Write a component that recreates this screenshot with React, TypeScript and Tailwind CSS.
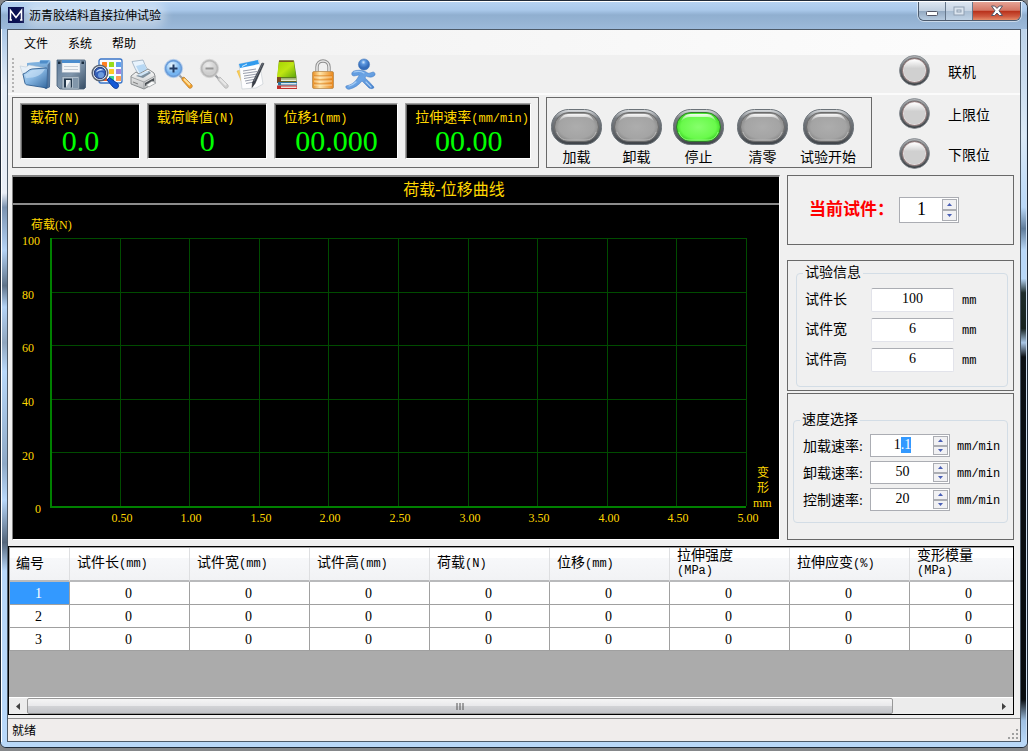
import { useEffect, useRef } from "react";

const MENU = ["文件", "系统", "帮助"];

const READOUTS = [
  { label: "载荷", unit: "(N)", value: "0.0", width: "w-[120px]" },
  { label: "载荷峰值", unit: "(N)", value: "0", width: "w-[120px]" },
  { label: "位移", unit: "1(mm)", value: "00.000", width: "w-[125px]" },
  { label: "拉伸速率", unit: "(mm/min)", value: "00.00", width: "w-[126px]" },
];

const ACTIONS = [
  { label: "加载", on: false },
  { label: "卸载", on: false },
  { label: "停止", on: true },
  { label: "清零", on: false },
  { label: "试验开始", on: false },
];

const COLUMNS = [
  { name: "试件长", unit: "(mm)" },
  { name: "试件宽", unit: "(mm)" },
  { name: "试件高", unit: "(mm)" },
  { name: "荷载", unit: "(N)" },
  { name: "位移", unit: "(mm)" },
  { name: "拉伸强度", unit: "(MPa)", wrap: true },
  { name: "拉伸应变", unit: "(%)" },
  { name: "变形模量", unit: "(MPa)", wrap: true },
];

const TOOLS = [
  { label: "打开", icon: <OpenIcon /> },
  { label: "保存", icon: <SaveIcon /> },
  { label: "预览", icon: <PreviewIcon /> },
  { label: "打印", icon: <PrintIcon /> },
  { label: "放大", icon: <ZoomIcon zoomIn /> },
  { label: "缩小", icon: <ZoomIcon /> },
  { label: "记录", icon: <NotesIcon /> },
  { label: "数据", icon: <BooksIcon /> },
  { label: "锁定", icon: <LockIcon /> },
  { label: "运行", icon: <RunnerIcon /> },
];

export default function App() {
  return (
    <div className="min-h-screen bg-[#85878a] pb-[3px] font-['Liberation_Serif','Noto_Sans_CJK_SC',serif] text-sm text-black">
      <div className="flex min-h-[calc(100vh-3px)] flex-col overflow-hidden rounded-t-lg rounded-b-md border border-[#1f2a38] bg-[#b9d7f7]">
        <TitleBar />
        <div className="grid flex-1 grid-cols-[6px_1fr_6px]">
          <div className="border-l border-white bg-[linear-gradient(to_bottom,#a9c6e6_0%,#e4edf7_8%,#e9eef6_23%,#7b93b0_25%,#b4d3f5_31%,#5f7389_36%,#b4d3f5_39%,#90a6be_44%,#b8d8fa_48%,#8ea9c6_61%,#b8d8fa_66%,#53657a_72%,#b8d8fa_76%,#b8d8fa_100%)]" />
          <main className="flex min-w-0 flex-col border border-[#4d5a68] bg-[#f0f0f0]">
            <MenuBar />
            <Toolbar />
            <TopPanels />
            <div className="mt-[6px] flex gap-[7px] pr-[6px] pl-1">
              <Plot />
              <SidePanels />
            </div>
            <ResultTable />
            <footer className="mt-[3px] flex items-end justify-between border-t border-[#8c8c8c] bg-[#f0edec] pl-1 font-['Noto_Sans_CJK_SC',sans-serif] text-xs leading-[22px]">
              <span>就绪</span>
              <svg className="mr-px mb-px size-3" viewBox="0 0 12 12" fill="#a0a0a0">
                <path d="M9 1h2v2H9zM5 5h2v2H5zM9 5h2v2H9zM1 9h2v2H1zM5 9h2v2H5zM9 9h2v2H9z" />
              </svg>
            </footer>
          </main>
          <div className="border-r border-[#cfe0f2] bg-[linear-gradient(to_bottom,#bdd3ea_0%,#dbe9f6_15%,#b9d8f8_25%,#5f7b99_28%,#b9d8f8_31%,#b9d8f8_35%,#1d2c2c_37%,#15211f_42%,#a9c6e6_44%,#0b1015_46%,#070b0f_94%,#9fc0e2_97%,#b9d8f8_100%)]" />
        </div>
        <div className="h-[5px] bg-[#b9d8f8]" />
      </div>
    </div>
  );
}

function TitleBar() {
  return (
    <header className="flex h-7 items-start justify-between border-t border-white bg-[linear-gradient(to_bottom,#b5d2f1_0%,#a9c8ea_30%,#90afd0_48%,#96b4d4_75%,#9cbadb_100%)] pr-[6px] pl-[7px]">
      <div className="flex items-center gap-[5px] pt-[5px]">
        <svg className="size-4" viewBox="0 0 16 16">
          <rect width="16" height="16" fill="#0a1152" />
          <path d="M2.500 13V3.500L8 10.500l5.500-7V13M1.500 13h2.500M12 13h2.500" fill="none" stroke="#fff" strokeWidth="1.500" />
        </svg>
        <h1 className="rounded-full bg-white/35 font-['Noto_Sans_CJK_SC',sans-serif] text-xs leading-4 shadow-[0_0_8px_5px_rgba(255,255,255,0.35)]">
          沥青胶结料直接拉伸试验
        </h1>
      </div>
      <div className="flex h-[19px] overflow-hidden rounded-b-md border border-t-0 border-[#4c5b6e] shadow-[0_0_0_1px_rgba(255,255,255,0.5)]">
        <button aria-label="最小化" className="flex w-[27px] items-center justify-center border-r border-[#66778b] bg-[linear-gradient(to_bottom,#dce6f1_0%,#c0cfdf_48%,#93a9c1_52%,#b7cbe0_100%)]">
          <svg className="mt-1" width="14" height="8" viewBox="0 0 14 8">
            <rect x="1.500" y="2.500" width="11" height="4" rx="1" fill="#fff" stroke="#535666" />
          </svg>
        </button>
        <button aria-label="最大化" className="flex w-[27px] items-center justify-center border-r border-[#66778b] bg-[linear-gradient(to_bottom,#dce6f1_0%,#c8d5e4_48%,#a9bdd2_52%,#c0d2e5_100%)]">
          <svg width="13" height="10" viewBox="0 0 13 10">
            <rect x="1" y="1" width="10" height="8" fill="#dbe4ee" stroke="#8f9fb2" />
            <rect x="4" y="4" width="4" height="2" fill="none" stroke="#8f9fb2" />
          </svg>
        </button>
        <button aria-label="关闭" className="flex w-[47px] items-center justify-center bg-[linear-gradient(to_bottom,#e5a395_0%,#d47765_46%,#b9321c_52%,#cf5a40_80%,#e58d6a_100%)]">
          <svg width="14" height="12" viewBox="0 0 14 12">
            <path d="M1.500 1h3.200L7 3.400 9.300 1h3.200L9 5.800l3.500 4.700H9.300L7 8l-2.300 2.500H1.500L5 5.800z" fill="#fff" stroke="#525565" />
          </svg>
        </button>
      </div>
    </header>
  );
}

function MenuBar() {
  return (
    <nav className="flex h-[25px] items-center gap-5 bg-gradient-to-r from-[#f0f0f0] to-[#fdfdfd] pl-4 font-['Noto_Sans_CJK_SC',sans-serif] text-xs">
      {MENU.map((item) => (
        <button key={item}>{item}</button>
      ))}
    </nav>
  );
}

function Toolbar() {
  return (
    <div className="flex h-10 items-start justify-between border-b-2 border-[#fbfbfb]">
      <div className="flex pt-[3px] pl-1">
        <svg className="h-[34px] w-[5px]" viewBox="0 0 5 34" fill="#b4b4b4">
          {[1, 5, 9, 13, 17, 21, 25, 29, 33].map((y) => (
            <rect key={y} y={y - 1} width="2" height="2" />
          ))}
        </svg>
        {TOOLS.map((tool) => (
          <button key={tool.label} aria-label={tool.label} className="flex w-9 justify-center">
            {tool.icon}
          </button>
        ))}
      </div>
      <Lamp label="联机" />
    </div>
  );
}

function Lamp({ label }: { label: string }) {
  return (
    <div className="flex w-[121px] shrink-0 items-center gap-[18px]">
      <svg className="size-[31px]" viewBox="0 0 31 31">
        <defs>
          <linearGradient id="lampRim" x1="0" y1="0" x2="0" y2="1">
            <stop offset="0" stopColor="#b4b6b8" />
            <stop offset="0.5" stopColor="#62666a" />
            <stop offset="1" stopColor="#3c4044" />
          </linearGradient>
          <linearGradient id="lampShine" x1="0" y1="0" x2="0" y2="1">
            <stop offset="0" stopColor="#fff" />
            <stop offset="0.4" stopColor="#d0d0d0" />
          </linearGradient>
        </defs>
        <circle cx="15.500" cy="15.500" r="15" fill="url(#lampRim)" stroke="#80878d" strokeWidth="0.800" />
        <circle cx="15.500" cy="15.500" r="13" fill="#6f7073" />
        <circle cx="15.500" cy="15.500" r="12" fill="#e9e4e4" stroke="#7b5b5b" strokeWidth="0.700" />
        <circle cx="15.500" cy="15.500" r="10.800" fill="url(#lampShine)" />
      </svg>
      <span className="pt-[5px] leading-4">{label}</span>
    </div>
  );
}

function TopPanels() {
  return (
    <div className="flex justify-between pt-[2px] pl-1">
      <div className="flex gap-[7px]">
        <section className="flex h-[71px] w-[527px] gap-[7px] border border-[#696969] px-[7px] pt-[5px]">
          {READOUTS.map((item) => (
            <div
              key={item.label}
              className={`${item.width} h-[56px] border border-t-[#a0a0a0] border-r-white border-b-white border-l-[#a0a0a0]`}
            >
              <div className="h-full border-t border-l border-[#696969] bg-black pt-[5px]">
                <div className="pl-2 leading-4 whitespace-nowrap text-[#ffd700]">
                  {item.label}
                  <Unit>{item.unit}</Unit>
                </div>
                <div className="text-center text-[30px] leading-[28px] text-[#00ff00]">{item.value}</div>
              </div>
            </div>
          ))}
        </section>
        <section className="grid h-[71px] w-[326px] grid-cols-[59px_61px_63px_65px_66px] border border-[#696969] pt-[11px]">
          {ACTIONS.map((action) => (
            <button key={action.label} className="flex flex-col items-center gap-[5px]">
              <Pill on={action.on} />
              <span className="leading-4 whitespace-nowrap">{action.label}</span>
            </button>
          ))}
        </section>
      </div>
      <div className="flex flex-col gap-[9px] pt-px">
        <Lamp label="上限位" />
        <Lamp label="下限位" />
      </div>
    </div>
  );
}

function Pill({ on }: { on: boolean }) {
  return (
    <svg className="h-9 w-[51px] shrink-0" viewBox="0 0 51 36">
      <defs>
        <linearGradient id="pillRim" x1="0" y1="0" x2="0" y2="1">
          <stop offset="0" stopColor="#dfe2e5" />
          <stop offset="0.25" stopColor="#787c81" />
          <stop offset="0.75" stopColor="#5a5e63" />
          <stop offset="1" stopColor="#3d4146" />
        </linearGradient>
        <linearGradient id="pillShine" x1="0" y1="0" x2="0" y2="1">
          <stop offset="0" stopColor="#fff" stopOpacity="0.950" />
          <stop offset="1" stopColor="#fff" stopOpacity="0" />
        </linearGradient>
        <radialGradient id="pillOff">
          <stop offset="0" stopColor="#adadad" />
          <stop offset="0.8" stopColor="#a4a4a4" />
          <stop offset="1" stopColor="#8f8f8f" />
        </radialGradient>
        <radialGradient id="pillOn">
          <stop offset="0" stopColor="#86ff6c" />
          <stop offset="0.8" stopColor="#69fa4b" />
          <stop offset="1" stopColor="#45dd2c" />
        </radialGradient>
      </defs>
      <rect x="0.500" y="0.500" width="50" height="35" rx="17" fill="url(#pillRim)" stroke="#6b7278" />
      <rect x="3.500" y="3.500" width="44" height="29" rx="14.500" fill={on ? "url(#pillOn)" : "url(#pillOff)"} stroke={on ? "#2f7d2a" : "#6c6c6c"} />
      <path d="M8 13c1-5 5-8 9-8h17c4 0 8 3 9 8-3-4-6-5-9-5H17c-3 0-6 1-9 5z" fill="url(#pillShine)" />
      <path d="M6 23c2 6 6 8 11 8h17c5 0 9-2 11-8" fill="none" stroke={on ? "#a7ff94" : "#c4c4c4"} strokeOpacity="0.700" />
    </svg>
  );
}

function Unit({ children }: { children: React.ReactNode }) {
  return <span className="font-['Liberation_Mono',monospace] text-xs">{children}</span>;
}

function Plot() {
  const xs = [1, 2, 3, 4, 5, 6, 7, 8, 9, 10];
  const ys = [0, 1, 2, 3, 4];
  return (
    <section className="flex min-w-0 flex-1 flex-col border border-t-2 border-t-[#808080] border-r-white border-b-white border-l-[#808080] bg-black">
      <h2 className="border-b-2 border-[#8c8c8c] pl-[116px] text-center text-base leading-[26px] text-[#ffd700]">
        荷载-位移曲线
      </h2>
      <svg className="w-full" viewBox="0 0 766 334" fontSize="12" fill="#ffd700">
        <g stroke="#004b00" shapeRendering="crispEdges">
          {xs.map((i) => {
            const x = Math.round(37 + i * 69.6) + 0.5;
            return <line key={i} x1={x} x2={x} y1="33" y2="301" />;
          })}
          {ys.map((i) => {
            const y = Math.round(33 + i * 53.6) + 0.5;
            return <line key={i} x1="37" x2="733" y1={y} y2={y} />;
          })}
        </g>
        <path d="M38 33V302H733" fill="none" stroke="#008000" strokeWidth="2" shapeRendering="crispEdges" />
        <text x="18" y="24">荷载(N)</text>
        {["100", "80", "60", "40", "20"].map((label, i) => (
          <text key={label} x="9" y={Math.round(40 + i * 53.7)}>{label}</text>
        ))}
        <text x="22" y="308">0</text>
        {xs.map((i) => (
          <text key={i} x={Math.round(39 + i * 69.6)} y="317" textAnchor="middle">
            {(i * 0.5).toFixed(2)}
          </text>
        ))}
        <text x="744" y="272">变</text>
        <text x="744" y="287">形</text>
        <text x="740" y="302">mm</text>
      </svg>
    </section>
  );
}

function SidePanels() {
  return (
    <aside className="flex w-[227px] shrink-0 flex-col">
      <section className="flex h-[70px] items-center gap-[5px] border border-[#696969] pl-[21px]">
        <label htmlFor="specimen" className="text-[17px] font-bold text-[#ff0000]">
          当前试件：
        </label>
        <Spinner id="specimen" value="1" large />
      </section>

      <section className="mt-[15px] border border-[#696969] px-[5px] pt-1 pb-[3px] pl-2">
        <fieldset className="h-[122px] rounded border border-[#d3dde6] shadow-none">
          <legend className="ml-[6px] px-[2px] leading-4">试验信息</legend>
          <div className="flex flex-col gap-[6px] pt-[7px] pl-2">
            <SizeRow id="length" label="试件长" value="100" />
            <SizeRow id="width" label="试件宽" value="6" />
            <SizeRow id="height" label="试件高" value="6" />
          </div>
        </fieldset>
      </section>

      <section className="mt-[2px] flex-1 border border-[#696969] px-[5px] pt-[18px]">
        <fieldset className="h-[111px] rounded border border-[#d3dde6]">
          <legend className="ml-[6px] px-[2px] leading-4">速度选择</legend>
          <div className="flex flex-col gap-1 pt-[6px] pl-[9px]">
            <SpeedRow id="load-rate" label="加载速率" value="1.1" selectFrom={1} />
            <SpeedRow id="unload-rate" label="卸载速率" value="50" />
            <SpeedRow id="control-rate" label="控制速率" value="20" />
          </div>
        </fieldset>
      </section>
    </aside>
  );
}

function SizeRow({ id, label, value }: { id: string; label: string; value: string }) {
  return (
    <div className="flex items-center">
      <label htmlFor={id} className="w-[66px] leading-4">{label}</label>
      <input
        id={id}
        defaultValue={value}
        className="h-6 w-[83px] rounded-xs border border-[#e2e3ea] border-t-[#abadb3] bg-white pb-[2px] text-center"
      />
      <span className="pl-2 leading-4"><Unit>mm</Unit></span>
    </div>
  );
}

function SpeedRow({ id, label, value, selectFrom }: { id: string; label: string; value: string; selectFrom?: number }) {
  return (
    <div className="flex items-center">
      <label htmlFor={id} className="w-[67px] pt-[2px] leading-4">{label}:</label>
      <Spinner id={id} value={value} selectFrom={selectFrom} />
      <span className="pt-[2px] pl-[7px] leading-4"><Unit>mm/min</Unit></span>
    </div>
  );
}

function Spinner({ id, value, large, selectFrom }: { id: string; value: string; large?: boolean; selectFrom?: number }) {
  const ref = useRef<HTMLInputElement>(null);

  useEffect(() => {
    if (selectFrom === undefined || !ref.current) return;
    ref.current.focus();
    ref.current.setSelectionRange(selectFrom, value.length);
  }, [selectFrom, value]);

  return (
    <div className={`flex border border-[#abadb3] bg-white p-px ${large ? "h-[26px] w-[60px]" : "h-[23px] w-20"}`}>
      <input
        ref={ref}
        id={id}
        defaultValue={value}
        className={`min-w-0 flex-1 pb-[2px] text-center outline-none selection:bg-[#3399ff] selection:text-white ${large ? "text-lg leading-5" : "text-sm leading-4"}`}
      />
      <div className="flex w-[15px] flex-col justify-between">
        <button aria-label="增加" tabIndex={-1} className="flex flex-1 items-center justify-center border border-[#abadb3] bg-[#f1f1f3]">
          <svg width="5" height="3" viewBox="0 0 5 3"><path d="M2.500 0L5 3H0z" fill="#4a5fb5" /></svg>
        </button>
        <button aria-label="减少" tabIndex={-1} className="flex flex-1 items-center justify-center border border-[#abadb3] bg-[#f1f1f3]">
          <svg width="5" height="3" viewBox="0 0 5 3"><path d="M0 0h5L2.500 3z" fill="#4a5fb5" /></svg>
        </button>
      </div>
    </div>
  );
}

function ResultTable() {
  return (
    <section className="mt-[6px] mr-[6px] flex min-w-0 flex-1 flex-col border border-black bg-[#ababab]">
      <div className="overflow-hidden border-t border-l border-[#a0a0a0]">
        <table className="w-[1020px] min-w-full table-fixed border-separate border-spacing-0">
          <thead>
            <tr className="h-[34px] bg-[linear-gradient(to_bottom,#fff_0%,#fff_28%,#f7f8fa_30%,#f1f2f4_100%)] text-left">
              <th className="w-[60px] border-r border-b-2 border-r-[#dedfe1] border-b-[#b9babc] pl-[6px] font-normal">编号</th>
              {COLUMNS.map((col) => (
                <th key={col.name} className="w-[120px] border-r border-b-2 border-r-[#dedfe1] border-b-[#b9babc] pl-[7px] leading-[14px] font-normal whitespace-nowrap">
                  {col.name}
                  {col.wrap && <br />}
                  <Unit>{col.unit}</Unit>
                </th>
              ))}
            </tr>
          </thead>
          <tbody>
            {[1, 2, 3].map((row) => (
              <tr key={row} className="h-[23px] bg-white text-center leading-4">
                <td className={`border-r border-b border-[#a0a0a0] pt-px pr-[2px] ${row === 1 ? "bg-[#3399ff] text-white" : ""}`}>{row}</td>
                {COLUMNS.map((col) => (
                  <td key={col.name} className="border-r border-b border-[#a0a0a0] pt-px pr-[2px]">0</td>
                ))}
              </tr>
            ))}
          </tbody>
        </table>
      </div>
      <div className="mt-auto flex h-[17px] border-t border-white bg-[#ececec]">
        <button aria-label="向左" className="flex w-[18px] items-center justify-center">
          <svg width="4" height="7" viewBox="0 0 4 7"><path d="M4 0v7L0 3.500z" fill="#404040" /></svg>
        </button>
        <div className="flex flex-1">
          <div className="flex w-[89.500%] items-center justify-center rounded-xs border border-[#979797] bg-[linear-gradient(to_bottom,#f5f5f5_0%,#e9e9eb_48%,#d2d3d6_52%,#c2c4c8_100%)]">
            <svg width="8" height="7" viewBox="0 0 8 7"><path d="M1 0v7M4 0v7M7 0v7" stroke="#555" /></svg>
          </div>
        </div>
        <button aria-label="向右" className="flex w-[18px] items-center justify-center">
          <svg width="4" height="7" viewBox="0 0 4 7"><path d="M0 0v7l4-3.500z" fill="#404040" /></svg>
        </button>
      </div>
    </section>
  );
}

/* TOOLBAR ICONS */
function OpenIcon() {
  return (
    <svg className="size-8" viewBox="0 0 32 32">
      <defs>
        <linearGradient id="folder" x1="0" y1="0" x2="1" y2="1">
          <stop offset="0" stopColor="#c4e1f7" />
          <stop offset="0.450" stopColor="#86b6e2" />
          <stop offset="1" stopColor="#34689f" />
        </linearGradient>
        <linearGradient id="folderBack" x1="0" y1="0" x2="0" y2="1">
          <stop offset="0" stopColor="#8fc0ea" />
          <stop offset="1" stopColor="#2f5686" />
        </linearGradient>
      </defs>
      <path d="M8 5l12-1 2-2h8c1 0 1.500.5 1.500 2L31 29l-4 2L8 20z" fill="url(#folderBack)" />
      <path d="M9 5l18-1v3L9 8z" fill="#7fb1de" />
      <path d="M21 2.500h9l-2 3h-7z" fill="#4f8dc9" />
      <path d="M1 8l6 1 3-2 16 3 1 13-20 3z" fill="#e6eff7" stroke="#b4c4d3" strokeWidth="0.500" />
      <path d="M4 16c4-1 6-5 9-5l14-1c1 0 1.500 1 1.500 2L28 30 9 27c-2 0-3-1-3.300-3z" fill="url(#folder)" stroke="#2f5d90" strokeWidth="0.900" />
      <path d="M6 16.500c4-1 5-4 8-4.500l12-1c-3 6-9 9-19 9z" fill="#d3e8f9" opacity="0.550" />
      <path d="M28.500 7l2.500-3-.5 25-2 1z" fill="#54779f" />
    </svg>
  );
}

function SaveIcon() {
  return (
    <svg className="size-8" viewBox="0 0 32 32">
      <defs>
        <linearGradient id="disk" x1="0" y1="0" x2="1" y2="1">
          <stop offset="0" stopColor="#5f7c9b" />
          <stop offset="0.500" stopColor="#8096ac" />
          <stop offset="1" stopColor="#354b62" />
        </linearGradient>
      </defs>
      <path d="M2 2h27c1 0 1.500.5 1.500 1.500v26L29 31H5l-3-3z" fill="url(#disk)" stroke="#435a73" strokeWidth="0.800" />
      <path d="M7 2h18v12.500H7z" fill="#f3f5f7" stroke="#9dabba" strokeWidth="0.500" />
      <path d="M7 2h18v3H7z" fill="#4c8dce" />
      <path d="M9 8.500h14M9 11.500h14" stroke="#c6cdd5" />
      <path d="M3 3.500h2.500V6H3zM26.500 3.500H29V6h-2.500z" fill="#1a2c3f" />
      <path d="M7 18.500h17V31H7z" fill="#aebdca" stroke="#6d8195" strokeWidth="0.700" />
      <path d="M9 20.500h8v9H9z" fill="#24384c" />
      <path d="M11 22h4.500v7.500H11z" fill="#eef2f5" />
      <path d="M11 29.500l4.500-7.500v7.500z" fill="#aab8c5" />
      <path d="M18 20h5v10h-5z" fill="#8196aa" />
    </svg>
  );
}

function PreviewIcon() {
  const tiles = ["#ff8020", "#98dc1d", "#5fa0ef", "#ffc21a", "#ffc926", "#a182db", "#f0622d", "#3ed789", "#ff9e52"];
  return (
    <svg className="size-8" viewBox="0 0 32 32">
      <rect x="8" y="1" width="23" height="24" rx="2" fill="#f8fbff" stroke="#3974c7" strokeWidth="1.300" />
      {tiles.map((color, i) => (
        <rect key={color} x={11 + (i % 3) * 7} y={4 + Math.floor(i / 3) * 7} width="5" height="5" rx="0.500" fill={color} />
      ))}
      <path d="M16 22l2.500-2.500 8.500 6.500c1.500 1.500 0 5-2.500 4.500l-2-1z" fill="#1659d5" stroke="#0c3b9b" />
      <circle cx="9" cy="15" r="7.800" fill="#dce7f2" stroke="#5b6472" strokeWidth="1.500" />
      <circle cx="9" cy="15" r="5.700" fill="#3461ba" stroke="#2b3e78" />
      <path d="M5 14.500a4.500 4 0 018-2c-3-.5-5 0-8 2z" fill="#d6e6ff" />
      <circle cx="10" cy="17" r="3" fill="#84b5ee" opacity="0.700" />
    </svg>
  );
}

function PrintIcon() {
  return (
    <svg className="size-8" viewBox="0 0 32 32">
      <defs>
        <linearGradient id="printer" x1="0" y1="0" x2="0" y2="1">
          <stop offset="0" stopColor="#fdfdfd" />
          <stop offset="1" stopColor="#bfc1c2" />
        </linearGradient>
      </defs>
      <path d="M5 3.500l11-1.500c1 2 2 6 5 10l-9 5c-3-4-5-9-7-13.500z" fill="#e8f3fd" stroke="#8ba0b5" strokeWidth="0.700" />
      <path d="M9 8l8-2 3 6-7 4z" fill="#b7d8f4" />
      <path d="M4 18l5-4 3 2 9-5 6 4 1 3v7l-11 6-13-5z" fill="url(#printer)" stroke="#808487" strokeWidth="0.900" />
      <path d="M4 19l13 5 11-6M17 24v6" fill="none" stroke="#9a9d9f" strokeWidth="0.900" />
      <path d="M9 18l4-2 9-3 2 2-8 5z" fill="#7d8f9d" />
      <path d="M10 17l10-4 2 1-8 4z" fill="#cfe5f7" />
      <path d="M18 25l9-5v3l-9 5z" fill="#4b5055" />
      <path d="M19 27l6-4 4 2-7 4z" fill="#f9fafa" stroke="#85898c" strokeWidth="0.600" />
      <path d="M6 24l5 2" stroke="#777" strokeWidth="0.900" />
    </svg>
  );
}

function ZoomIcon({ zoomIn }: { zoomIn?: boolean }) {
  const ring = zoomIn ? "#6b9dd9" : "#b8b8b8";
  return (
    <svg className="size-8" viewBox="0 0 32 32">
      <defs>
        <radialGradient id={zoomIn ? "lensIn" : "lensOut"} cx="0.400" cy="0.300">
          <stop offset="0" stopColor={zoomIn ? "#effaff" : "#ececec"} />
          <stop offset="1" stopColor={zoomIn ? "#76b5f1" : "#cdcdcd"} />
        </radialGradient>
      </defs>
      <path d="M16 17l4 4" stroke="#9b9da0" strokeWidth="2" />
      <path d="M19 20l2-1 8 8c1 2-1 4-3 3l-7-8z" fill={zoomIn ? "#f5a12a" : "#cfcfcf"} stroke={zoomIn ? "#b88338" : "#b7b7b7"} strokeWidth="0.800" />
      <path d="M21 21l6 6" stroke={zoomIn ? "#ffe09c" : "#e8e8e8"} strokeWidth="1.800" />
      <circle cx="10.500" cy="10.500" r="8" fill={`url(#${zoomIn ? "lensIn" : "lensOut"})`} stroke={ring} strokeWidth="1.800" />
      <circle cx="10.500" cy="10.500" r="9.200" fill="none" stroke={zoomIn ? "#a9c5ea" : "#cdcdcd"} strokeWidth="0.700" />
      <path d={zoomIn ? "M6.500 10.500h8M10.500 6.500v8" : "M6.500 10.500h8"} stroke={zoomIn ? "#223b63" : "#969696"} strokeWidth="2" />
    </svg>
  );
}

function NotesIcon() {
  return (
    <svg className="size-8" viewBox="0 0 32 32">
      <path d="M2 13l8-2 3 17-5-1z" fill="#ffd24c" stroke="#e1a73a" strokeWidth="0.500" />
      <path d="M4 6l20-4 4 24-7 4-14 1z" fill="#fdfdfe" stroke="#b9c0c9" strokeWidth="0.500" />
      <path d="M4 6l19-4 1 4L5 10z" fill="#329bed" />
      <path d="M7 8.500l5-2.500" stroke="#d9efff" />
      <path d="M8 13l13-2M8 15.500l14-2M9 18l13-2M9 20.500l12-2M10 23l11-2M11 25.500l8-1.500" stroke="#8d93a4" strokeWidth="0.900" />
      <path d="M27 5l2 .5-9 20-3 4 .500-5z" fill="#3a3f49" stroke="#1d2027" strokeWidth="0.500" />
      <path d="M28 5l-9 18" fill="none" stroke="#9099a6" strokeWidth="0.600" />
    </svg>
  );
}

function BooksIcon() {
  return (
    <svg className="size-8" viewBox="0 0 32 32">
      <defs>
        <linearGradient id="cover" x1="0" y1="0" x2="1" y2="1">
          <stop offset="0" stopColor="#a2d300" />
          <stop offset="0.500" stopColor="#c0e512" />
          <stop offset="1" stopColor="#5fa80c" />
        </linearGradient>
      </defs>
      <path d="M8 2.500h15L25.500 19v5H6z" fill="#5a7c18" />
      <path d="M8 3h14.500L25 19H6z" fill="url(#cover)" />
      <path d="M8 2.500h14.500V4H8z" fill="#7c5a20" />
      <path d="M10 20.500h15v2.500H10z" fill="#e9eed5" />
      <path d="M10 21.500h15" stroke="#93a55e" strokeWidth="0.600" />
      <path d="M6 19h4v4.500h16V25H6z" fill="#7a4a22" />
      <path d="M7 24h19v3.500H7z" fill="#2f77a3" />
      <path d="M10 25h15.500v1.500H10z" fill="#dbe8ee" />
      <path d="M6 27.500h20V31H6z" fill="#c02d2b" />
      <path d="M10 28.500h15.500V30H10z" fill="#f0dcd5" />
    </svg>
  );
}

function LockIcon() {
  return (
    <svg className="size-8" viewBox="0 0 32 32">
      <defs>
        <linearGradient id="brass" x1="0" x2="1">
          <stop offset="0" stopColor="#e78c20" />
          <stop offset="0.35" stopColor="#ffe5a9" />
          <stop offset="1" stopColor="#e98518" />
        </linearGradient>
      </defs>
      <path d="M10 14V9c0-8 12-8 12 0v5" fill="none" stroke="#8d8d8d" strokeWidth="3.400" />
      <path d="M10 14V9c0-8 12-8 12 0v5" fill="none" stroke="#e6e6e6" strokeWidth="1.600" />
      <rect x="5.500" y="13.500" width="21" height="17" rx="1.500" fill="url(#brass)" stroke="#b98b51" strokeWidth="0.800" />
      <path d="M7 18h18M7 22h18M7 26h18" stroke="#d97b17" />
      <path d="M7 19h18M7 23h18M7 27h18" stroke="#fff0ce" opacity="0.700" />
    </svg>
  );
}

function RunnerIcon() {
  return (
    <svg className="ml-1 size-8" viewBox="0 0 32 32">
      <defs>
        <radialGradient id="head" cx="0.450" cy="0.300">
          <stop offset="0" stopColor="#d0e8ff" />
          <stop offset="0.400" stopColor="#5b96de" />
          <stop offset="1" stopColor="#356cb9" />
        </radialGradient>
        <linearGradient id="runner" x1="0" y1="0" x2="1" y2="1">
          <stop offset="0" stopColor="#5a97de" />
          <stop offset="0.500" stopColor="#6ba4e4" />
          <stop offset="1" stopColor="#3f7cca" />
        </linearGradient>
      </defs>
      <path
        d="M9 13c3-1 7-1 10 0 3 1 4 3 6 2l3-1c2 0 3 3 1 4-3 2-6 1-8 0-1 1-1 2 0 3 3 2 5 5 8 8 0 2-3 2-5 1l-7-7c-3 4-8 7-12 8-2 1-5-1-4-3 5-1 8-3 11-7 1-2 2-3 2-4l-5 1c-3 0-3-4 0-5z"
        fill="url(#runner)"
        stroke="#3f79c2"
        strokeWidth="0.500"
      />
      <path d="M9 14c4-1 7-1 10 1M21 24l5 5M4 28c3-1 5-2 7-4" fill="none" stroke="#a4cbf4" strokeWidth="1.200" strokeLinecap="round" />
      <circle cx="19" cy="6.500" r="5.600" fill="url(#head)" stroke="#3e72b4" strokeWidth="0.500" />
    </svg>
  );
}
